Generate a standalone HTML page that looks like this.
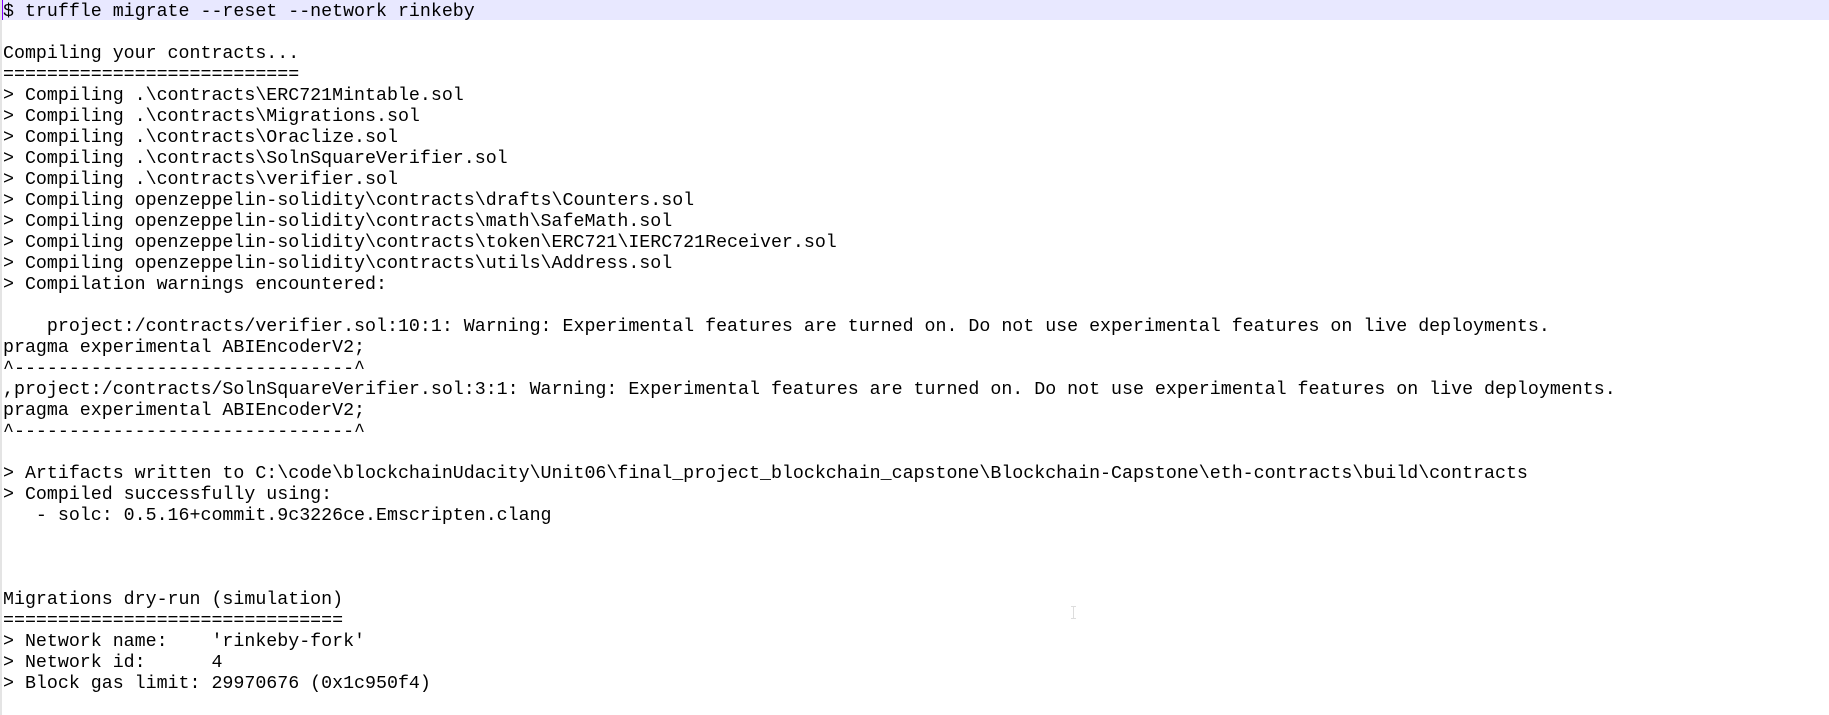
<!DOCTYPE html>
<html><head><meta charset="utf-8"><style>
html,body{margin:0;padding:0;background:#fff;width:1829px;height:715px;overflow:hidden}
.gut{position:absolute;left:0;top:0;width:2px;height:715px;background:#e4e4e4}
.band{position:absolute;left:2px;top:0;width:1827px;height:20px;background:#e8e8ff}
.caret{position:absolute;left:2px;top:0;width:1px;height:20px;background:#8000ff}
pre{position:absolute;left:3px;top:2px;margin:0;font-family:"Liberation Mono","Courier New",monospace;font-size:18.3px;line-height:21px;color:#000;white-space:pre}
.ib{position:absolute;left:1073px;top:606px;width:1px;height:13px;background:#ddd}
.ib:before,.ib:after{content:"";position:absolute;left:-2px;width:5px;height:1px;background:#ddd}
.ib:before{top:0}.ib:after{bottom:0}
</style></head><body>
<div class="gut"></div><div class="band"></div><div class="caret"></div>
<pre>$ truffle migrate --reset --network rinkeby

Compiling your contracts...
===========================
&gt; Compiling .\contracts\ERC721Mintable.sol
&gt; Compiling .\contracts\Migrations.sol
&gt; Compiling .\contracts\Oraclize.sol
&gt; Compiling .\contracts\SolnSquareVerifier.sol
&gt; Compiling .\contracts\verifier.sol
&gt; Compiling openzeppelin-solidity\contracts\drafts\Counters.sol
&gt; Compiling openzeppelin-solidity\contracts\math\SafeMath.sol
&gt; Compiling openzeppelin-solidity\contracts\token\ERC721\IERC721Receiver.sol
&gt; Compiling openzeppelin-solidity\contracts\utils\Address.sol
&gt; Compilation warnings encountered:

    project:/contracts/verifier.sol:10:1: Warning: Experimental features are turned on. Do not use experimental features on live deployments.
pragma experimental ABIEncoderV2;
^-------------------------------^
,project:/contracts/SolnSquareVerifier.sol:3:1: Warning: Experimental features are turned on. Do not use experimental features on live deployments.
pragma experimental ABIEncoderV2;
^-------------------------------^

&gt; Artifacts written to C:\code\blockchainUdacity\Unit06\final_project_blockchain_capstone\Blockchain-Capstone\eth-contracts\build\contracts
&gt; Compiled successfully using:
   - solc: 0.5.16+commit.9c3226ce.Emscripten.clang



Migrations dry-run (simulation)
===============================
&gt; Network name:    'rinkeby-fork'
&gt; Network id:      4
&gt; Block gas limit: 29970676 (0x1c950f4)
</pre>
<div class="ib"></div>
</body></html>
